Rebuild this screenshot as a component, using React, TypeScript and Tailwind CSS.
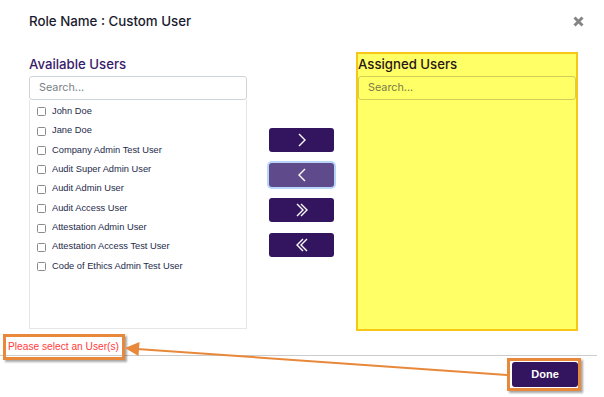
import React from "react";

const users = [
  "John Doe",
  "Jane Doe",
  "Company Admin Test User",
  "Audit Super Admin User",
  "Audit Admin User",
  "Audit Access User",
  "Attestation Admin User",
  "Attestation Access Test User",
  "Code of Ethics Admin Test User",
];

function Chev({ dir, double }: { dir: "l" | "r"; double?: boolean }) {
  const single = (ox: number) =>
    dir === "r" ? `M${ox} 1 L${ox + 6} 7 L${ox} 13` : `M${ox + 6} 1 L${ox} 7 L${ox + 6} 13`;
  return (
    <svg width={double ? 12 : 8} height={14} viewBox={double ? "0 0 12 14" : "0 0 8 14"} fill="none">
      <path d={single(1)} stroke="white" strokeWidth="1.4" strokeLinejoin="miter" />
      {double && <path d={single(5)} stroke="white" strokeWidth="1.4" />}
    </svg>
  );
}

export default function App() {
  return (
    <div className="relative w-[604px] h-[397px] bg-white overflow-hidden font-['Inter',sans-serif]">
      {/* header */}
      <div className="h-[44px] pl-[29px] pr-[20px] flex items-center justify-between">
        <div className="text-[13.3px] font-medium text-[#1b1b2f]">Role Name : Custom User</div>
        <svg width="11" height="11" viewBox="0 0 11 11" className="mt-[-2px]">
          <path d="M1.5 1.5 L9.5 9.5 M9.5 1.5 L1.5 9.5" stroke="#858585" strokeWidth="3" />
        </svg>
      </div>

      {/* body */}
      <div className="flex pt-[8px] pl-[29px] pr-[26px]">
        <div className="w-[218px] shrink-0 pt-[2px] flex flex-col">
          <div className="h-[20px] leading-[20px] text-[13.2px] font-medium text-[#3a1a6a]">Available Users</div>
          <div className="mt-[2px] h-[24px] border border-[#cfd4da] rounded-[3px] flex items-center pl-[9px] text-[10.8px] text-[#7a7f85]">
            Search...
          </div>
          <div className="h-[229px] border border-t-0 border-[#e6e6e6] pt-[2px] font-['Liberation_Sans',Arial,sans-serif]">
            {users.map((u) => (
              <div key={u} className="h-[19.4px] flex items-center pl-[7px]">
                <span className="w-[9px] h-[9px] border border-[#8a8a8a] rounded-[1.5px] bg-white" />
                <span className="ml-[6px] text-[9.3px] text-[#1e2a4a]">{u}</span>
              </div>
            ))}
          </div>
        </div>

        <div className="flex-1 flex flex-col items-center pt-[76px] gap-[11px]">
          <div className="w-[65px] h-[24px] rounded-[3px] bg-[#33145e] flex items-center justify-center">
            <Chev dir="r" />
          </div>
          <div className="w-[65px] h-[24px] rounded-[3px] bg-[#5f4a8b] flex items-center justify-center ring-2 ring-[#b8d6fa]">
            <Chev dir="l" />
          </div>
          <div className="w-[65px] h-[24px] rounded-[3px] bg-[#33145e] flex items-center justify-center">
            <Chev dir="r" double />
          </div>
          <div className="w-[65px] h-[24px] rounded-[3px] bg-[#33145e] flex items-center justify-center">
            <Chev dir="l" double />
          </div>
        </div>

        <div className="w-[222px] shrink-0 h-[279px] border-2 border-[#f7c616] bg-[#ffff66] flex flex-col">
          <div className="h-[20px] leading-[20px] text-[13.2px] font-medium text-[#2a1616]">Assigned Users</div>
          <div className="mt-[2px] h-[24px] border border-[#d3ce58] rounded-[3px] flex items-center pl-[9px] text-[10.8px] text-[#7a7a4a]">
            Search...
          </div>
        </div>
      </div>

      {/* error row */}
      <div className="h-[24px] pt-[8px] pl-[8px] leading-[16px] text-[10.2px] text-[#ff3b3b] font-['Liberation_Sans',Arial,sans-serif]">
        Please select an User(s)
      </div>

      {/* footer */}
      <div className="w-[597px] border-t border-[#cccccc] pt-[6px] flex justify-end pr-[19px]">
        <div className="w-[66px] h-[25px] rounded-[3px] bg-[#33145e] flex items-center justify-center text-white text-[11px] font-semibold font-['Liberation_Sans',Arial,sans-serif]">
          Done
        </div>
      </div>

      {/* annotations */}
      <div className="absolute left-[3px] top-[334px] w-[122px] h-[26px] border-[3px] border-[#e8883a] shadow-[2px_2px_2px_rgba(0,0,0,0.35)]" />
      <div className="absolute left-[507px] top-[358px] w-[74px] h-[33px] border-[3px] border-[#e8883a] shadow-[2px_2px_2px_rgba(0,0,0,0.35)]" />
      <svg className="absolute left-0 top-0 pointer-events-none" width="604" height="397">
        <line x1="137" y1="349" x2="507" y2="375" stroke="#e8883a" strokeWidth="2" />
        <polygon points="125,348 139.5,342 138.5,356" fill="#e8883a" />
      </svg>
    </div>
  );
}
